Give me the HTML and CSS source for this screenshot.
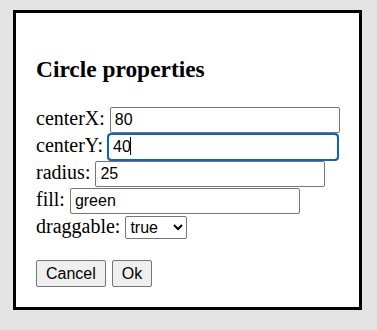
FILE: index.html
```
<!doctype html>
<html>
<head>
<meta charset="utf-8">
<title>Circle properties</title>
<link rel="stylesheet" href="styles.css">
</head>
<body>
<div class="dialog">
	<h3>Circle properties</h3>
	<form class="props">
		<div class="row"><label>centerX: <input type="text" value="80"></label></div>
		<div class="row"><label>centerY: <span class="field"><input type="text" class="focused" value="40"><i class="caret"></i></span></label></div>
		<div class="row"><label>radius: <input type="text" value="25"></label></div>
		<div class="row"><label>fill: <input type="text" value="green"></label></div>
		<div class="row"><label>draggable: <select><option>true</option><option>false</option></select></label></div>
		<div class="buttons">
			<button type="button">Cancel</button>
			<button type="button">Ok</button>
		</div>
	</form>
</div>
</body>
</html>
```

FILE: styles.css
```
*{margin:0;padding:0}
html,body{background:#e4e4e4}
body{padding:10px 15px 20px 13px;font-family:"Liberation Serif","Times New Roman",serif}
.dialog{width:349px;height:300px;box-sizing:border-box;border:3px solid #000;background:#fff;padding:20px 20px;font-size:20px}
.dialog h3{font-size:23.4px;font-weight:bold;margin:23px 0 22px}
.props .row{line-height:27px;height:27px;white-space:nowrap}
.props input{width:230px;box-sizing:border-box;font:16px "Liberation Sans",Arial,sans-serif;padding:3px 4px;border:1px solid #767676;border-radius:2px;color:#000;background:#fff;vertical-align:baseline;outline:none}
.props .field{position:relative;display:inline-block}
.props input.focused{outline:2px solid #0b63ce;outline-offset:-1px;border-color:#0b63ce;border-radius:3px}
.props .caret{position:absolute;left:22px;top:5px;width:1px;height:18px;background:#000}
.props select{font:16px "Liberation Sans",Arial,sans-serif;width:62px;height:23px;border:1px solid #767676;border-radius:2px;background:#fff;color:#000}
.props .buttons{margin-top:20px;display:flex;gap:6px}
.props button{font:16px "Liberation Sans",Arial,sans-serif;height:27px;padding:0 9px;background:#efefef;border:1px solid #767676;border-radius:2px;color:#000}
```
